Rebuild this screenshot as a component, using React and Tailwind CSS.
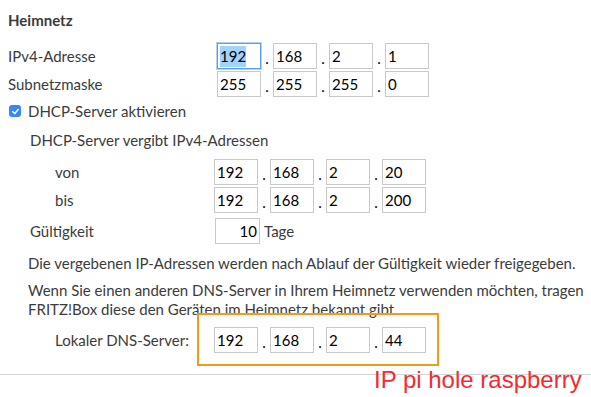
import React from 'react';

const IpField = ({ parts, selected }) => (
  <div className="flex items-center">
    {parts.map((p, i) => (
      <React.Fragment key={i}>
        {i > 0 && <span className="w-[12px] text-center text-black leading-none translate-y-[2px]">.</span>}
        <div
          className={`w-[44px] h-[26px] flex items-center pl-[2px] text-black bg-white ${
            selected && i === 0
              ? 'border border-[#5f9ee6] shadow-[0_0_0_1px_#b3d1f3]'
              : 'border border-[#c9c9c9]'
          }`}
        >
          {selected && i === 0 ? <span className="bg-[#a3d2fd] leading-[21px]">{p}</span> : p}
        </div>
      </React.Fragment>
    ))}
  </div>
);

const App = () => {
  return (
    <div className="relative w-[591px] h-[397px] overflow-hidden bg-white text-[15px] text-[#3b3b3b] font-['Lato','Open_Sans',sans-serif]">
      <div className="flex flex-col">
        {/* Heading */}
        <div className="pl-2 pt-[10px] h-[30px] leading-5 font-bold">Heimnetz</div>

        {/* IPv4 */}
        <div className="mt-[13px] h-[26px] flex items-center pl-2">
          <span className="w-[209px]">IPv4-Adresse</span>
          <IpField parts={['192', '168', '2', '1']} selected />
        </div>
        <div className="mt-[2px] h-[26px] flex items-center pl-2">
          <span className="w-[209px]">Subnetzmaske</span>
          <IpField parts={['255', '255', '255', '0']} />
        </div>

        {/* DHCP checkbox */}
        <div className="mt-[4px] h-5 flex items-center pl-[9px]">
          <span className="w-[12px] h-[12px] rounded-[3px] bg-[#3a86f7] flex items-center justify-center">
            <svg width="9" height="9" viewBox="0 0 10 10" fill="none">
              <path d="M2 5.2 L4.2 7.3 L8 2.8" stroke="white" strokeWidth="1.7" strokeLinecap="round" strokeLinejoin="round" />
            </svg>
          </span>
          <span className="ml-[7px]">DHCP-Server aktivieren</span>
        </div>

        <div className="mt-[9px] h-5 leading-5 pl-[30px]">DHCP-Server vergibt IPv4-Adressen</div>

        <div className="mt-[9px] h-[26px] flex items-center pl-[55px]">
          <span className="w-[159px]">von</span>
          <IpField parts={['192', '168', '2', '20']} />
        </div>
        <div className="mt-[2px] h-[26px] flex items-center pl-[55px]">
          <span className="w-[159px]">bis</span>
          <IpField parts={['192', '168', '2', '200']} />
        </div>

        {/* Gueltigkeit */}
        <div className="mt-[5px] h-[26px] flex items-center pl-[30px]">
          <span className="w-[185px]">Gültigkeit</span>
          <div className="w-[45px] h-[26px] border border-[#c9c9c9] flex items-center justify-end pr-[2px] text-black">10</div>
          <span className="ml-[4px]">Tage</span>
        </div>

        <div className="mt-[9px] h-5 leading-5 pl-[28px] whitespace-nowrap">
          Die vergebenen IP-Adressen werden nach Ablauf der Gültigkeit wieder freigegeben.
        </div>
        <div className="mt-[8px] pl-[28px] leading-[19px] whitespace-nowrap">
          <div>Wenn Sie einen anderen DNS-Server in Ihrem Heimnetz verwenden möchten, tragen</div>
          <div>FRITZ!Box diese den Geräten im Heimnetz bekannt gibt.</div>
        </div>

        <div className="mt-[8px] h-[26px] flex items-center pl-[55px]">
          <span className="w-[159px]">Lokaler DNS-Server:</span>
          <IpField parts={['192', '168', '2', '44']} />
        </div>

        <div className="mt-[21px] border-t border-[#d4d4d4]" />
      </div>

      {/* annotations */}
      <div className="absolute left-[197px] top-[313px] w-[242px] h-[53px] border-2 border-[#f39a1e]" />
      <div className="absolute left-[374px] top-[368px] text-[24px] leading-6 text-[#f52a2f] font-['Liberation_Sans',Arial,sans-serif] whitespace-nowrap">
        IP pi hole raspberry
      </div>
    </div>
  );
};

export default App;
